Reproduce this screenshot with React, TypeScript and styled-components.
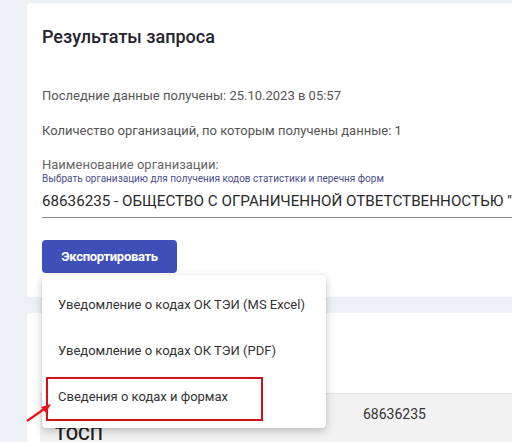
import { FC } from "react";
import styled, { createGlobalStyle } from "styled-components";

const menuItems = [
  "Уведомление о кодах ОК ТЭИ (MS Excel)",
  "Уведомление о кодах ОК ТЭИ (PDF)",
  "Сведения о кодах и формах",
];

const App: FC = () => {
  return (
    <>
      <GlobalStyle />
      <Page>
        <ResultCard>
          <Title>Результаты запроса</Title>
          <InfoLine>Последние данные получены: 25.10.2023 в 05:57</InfoLine>
          <InfoLine $gap={19}>
            Количество организаций, по которым получены данные: 1
          </InfoLine>
          <Field>
            <FieldLabel>Наименование организации:</FieldLabel>
            <FieldHint>
              Выбрать организацию для получения кодов статистики и перечня форм
            </FieldHint>
            <FieldValue>
              68636235 - ОБЩЕСТВО С ОГРАНИЧЕННОЙ ОТВЕТСТВЕННОСТЬЮ "ТОСП"
            </FieldValue>
          </Field>
          <ExportWrap>
            <ExportButton>Экспортировать</ExportButton>
            <Menu>
              {menuItems.map((item, index) => (
                <MenuItem key={index}>
                  {item}
                  {index === menuItems.length - 1 && <Highlight />}
                </MenuItem>
              ))}
            </Menu>
            <Arrow width="30" height="24" viewBox="0 0 30 24">
              <line x1="1" y1="21" x2="21" y2="7" stroke="#e3141e" strokeWidth="2.2" />
              <polygon points="25,4 15,7 20,13" fill="#e3141e" />
            </Arrow>
          </ExportWrap>
        </ResultCard>
        <TableCard>
          <TableRow>
            <OrgName>ТОСП</OrgName>
            <OrgCode>68636235</OrgCode>
          </TableRow>
        </TableCard>
      </Page>
    </>
  );
};

export default App;

const GlobalStyle = createGlobalStyle`
  html, body {
    margin: 0;
    padding: 0;
    background: #edf1f6;
    font-family: Roboto, "Liberation Sans", sans-serif;
  }
`;

const Page = styled.div`
  width: 512px;
  height: 442px;
  overflow: hidden;
  box-sizing: border-box;
  padding: 3px 0 0 27px;
  display: flex;
  flex-direction: column;
  gap: 16px;
`;

const ResultCard = styled.div`
  width: 620px;
  height: 294px;
  flex-shrink: 0;
  box-sizing: border-box;
  background: #ffffff;
  border-radius: 4px;
  padding: 23px 0 0 15px;
  display: flex;
  flex-direction: column;
  position: relative;
  z-index: 2;
`;

const Title = styled.h2`
  margin: 0;
  font-size: 18px;
  line-height: 22px;
  font-weight: 500;
  color: #24242e;
`;

const InfoLine = styled.div<{ $gap?: number }>`
  margin-top: ${(p) => p.$gap ?? 40}px;
  font-size: 13px;
  line-height: 16px;
  color: #555555;
`;

const Field = styled.div`
  margin-top: 18px;
  display: flex;
  flex-direction: column;
  border-bottom: 1px solid #8a8a8a;
  padding-bottom: 6px;
`;

const FieldLabel = styled.div`
  font-size: 13px;
  line-height: 16px;
  color: #666666;
`;

const FieldHint = styled.div`
  font-size: 10px;
  line-height: 12px;
  color: #4b4f8c;
`;

const FieldValue = styled.div`
  margin-top: 6px;
  font-size: 15.2px;
  line-height: 20px;
  color: #2a2a2a;
  white-space: nowrap;
`;

const ExportWrap = styled.div`
  margin-top: 22px;
  position: relative;
  align-self: flex-start;
`;

const ExportButton = styled.button`
  height: 33px;
  width: 135px;
  border: none;
  border-radius: 4px;
  background: #3e4fb8;
  color: #ffffff;
  font-family: Roboto, "Liberation Sans", sans-serif;
  font-size: 13px;
  font-weight: 700;
  letter-spacing: -0.3px;
  cursor: pointer;
`;

const Menu = styled.div`
  position: absolute;
  top: 35px;
  left: 0;
  width: 284px;
  box-sizing: border-box;
  padding: 6px 0 9px;
  background: #ffffff;
  border-radius: 4px;
  box-shadow: 0 3px 8px rgba(0, 0, 0, 0.22), 0 0 2px rgba(0, 0, 0, 0.08);
  display: flex;
  flex-direction: column;
`;

const MenuItem = styled.div`
  position: relative;
  height: 46px;
  display: flex;
  align-items: center;
  padding-left: 16px;
  font-size: 13px;
  color: #333333;
  white-space: nowrap;
`;

const Highlight = styled.div`
  position: absolute;
  left: 4px;
  top: 4px;
  width: 217px;
  height: 44px;
  box-sizing: border-box;
  border: 2px solid #d4101c;
`;

const Arrow = styled.svg`
  position: absolute;
  left: -16px;
  top: 160px;
`;

const TableCard = styled.div`
  width: 620px;
  flex: 1;
  background: #ffffff;
  border-radius: 4px;
  padding: 80px 0 0 13px;
  box-sizing: border-box;
`;

const TableRow = styled.div`
  height: 80px;
  background: #f2f2f2;
  border-top: 1px solid #e2e2e2;
  display: flex;
  position: relative;
`;

const OrgName = styled.div`
  position: absolute;
  left: 15px;
  top: 29px;
  font-size: 18px;
  font-weight: 500;
  color: #222222;
`;

const OrgCode = styled.div`
  margin-left: 323px;
  margin-top: 11px;
  font-size: 14px;
  line-height: 18px;
  color: #333333;
`;
